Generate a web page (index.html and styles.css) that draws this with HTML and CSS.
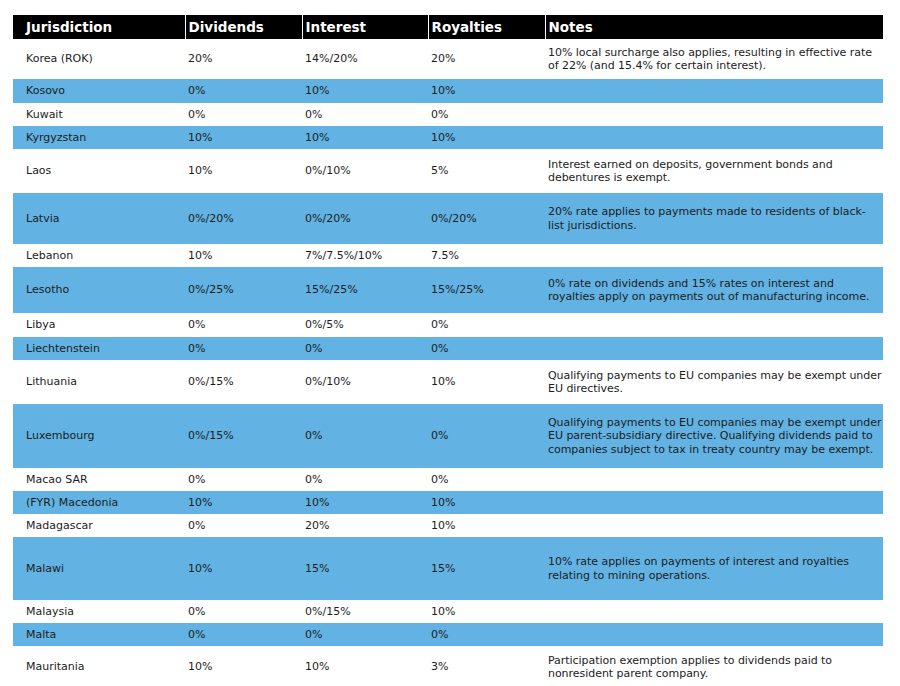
FILE: index.html
```html
<!DOCTYPE html>
<html>
<head>
<meta charset="utf-8">
<link rel="stylesheet" href="styles.css">
</head>
<body>
<table class="rates">
  <colgroup>
    <col class="c-jur"><col class="c-div"><col class="c-int"><col class="c-roy"><col class="c-notes">
  </colgroup>
  <thead>
    <tr>
      <th class="jur">Jurisdiction</th><th>Dividends</th><th>Interest</th><th>Royalties</th><th>Notes</th>
    </tr>
  </thead>
  <tbody>
    <tr class="h40"><td class="jur">Korea (ROK)</td><td>20%</td><td>14%/20%</td><td>20%</td><td class="note">10% local surcharge also applies, resulting in effective rate of 22% (and 15.4% for certain interest).</td></tr>
    <tr class="h24 blue"><td class="jur">Kosovo</td><td>0%</td><td>10%</td><td>10%</td><td class="note"></td></tr>
    <tr class="h23"><td class="jur">Kuwait</td><td>0%</td><td>0%</td><td>0%</td><td class="note"></td></tr>
    <tr class="h23 blue"><td class="jur">Kyrgyzstan</td><td>10%</td><td>10%</td><td>10%</td><td class="note"></td></tr>
    <tr class="h44"><td class="jur">Laos</td><td>10%</td><td>0%/10%</td><td>5%</td><td class="note">Interest earned on deposits, government bonds and debentures is exempt.</td></tr>
    <tr class="h51 blue"><td class="jur">Latvia</td><td>0%/20%</td><td>0%/20%</td><td>0%/20%</td><td class="note">20% rate applies to payments made to residents of black-<br>list jurisdictions.</td></tr>
    <tr class="h23"><td class="jur">Lebanon</td><td>10%</td><td>7%/7.5%/10%</td><td>7.5%</td><td class="note"></td></tr>
    <tr class="h45 blue"><td class="jur">Lesotho</td><td>0%/25%</td><td>15%/25%</td><td>15%/25%</td><td class="note">0% rate on dividends and 15% rates on interest and royalties apply on payments out of manufacturing income.</td></tr>
    <tr class="h24"><td class="jur">Libya</td><td>0%</td><td>0%/5%</td><td>0%</td><td class="note"></td></tr>
    <tr class="h23 blue"><td class="jur">Liechtenstein</td><td>0%</td><td>0%</td><td>0%</td><td class="note"></td></tr>
    <tr class="h44"><td class="jur">Lithuania</td><td>0%/15%</td><td>0%/10%</td><td>10%</td><td class="note">Qualifying payments to EU companies may be exempt under EU directives.</td></tr>
    <tr class="h64 blue"><td class="jur">Luxembourg</td><td>0%/15%</td><td>0%</td><td>0%</td><td class="note">Qualifying payments to EU companies may be exempt under EU parent-subsidiary directive. Qualifying dividends paid to companies subject to tax in treaty country may be exempt.</td></tr>
    <tr class="h23"><td class="jur">Macao SAR</td><td>0%</td><td>0%</td><td>0%</td><td class="note"></td></tr>
    <tr class="h23 blue"><td class="jur">(FYR) Macedonia</td><td>10%</td><td>10%</td><td>10%</td><td class="note"></td></tr>
    <tr class="h23"><td class="jur">Madagascar</td><td>0%</td><td>20%</td><td>10%</td><td class="note"></td></tr>
    <tr class="h63 blue"><td class="jur">Malawi</td><td>10%</td><td>15%</td><td>15%</td><td class="note">10% rate applies on payments of interest and royalties relating to mining operations.</td></tr>
    <tr class="h23"><td class="jur">Malaysia</td><td>0%</td><td>0%/15%</td><td>10%</td><td class="note"></td></tr>
    <tr class="h23 blue"><td class="jur">Malta</td><td>0%</td><td>0%</td><td>0%</td><td class="note"></td></tr>
    <tr class="h42"><td class="jur">Mauritania</td><td>10%</td><td>10%</td><td>3%</td><td class="note">Participation exemption applies to dividends paid to nonresident parent company.</td></tr>
  </tbody>
</table>
</body>
</html>
```
FILE: styles.css
```css
html, body {
  margin: 0;
  padding: 0;
  background: #ffffff;
}

.rates {
  margin: 15px 0 0 13px;
  width: 870px;
  table-layout: fixed;
  border-collapse: collapse;
  border-spacing: 0;
  font-family: "DejaVu Sans", Verdana, sans-serif;
  color: #1c1c1c;
}

.c-jur { width: 172px; }
.c-div { width: 117px; }
.c-int { width: 126px; }
.c-roy { width: 117px; }
.c-notes { width: 338px; }

.rates th {
  height: 24px;
  padding: 0 3px;
  background: #000000;
  color: #ffffff;
  font-size: 13.5px;
  font-weight: bold;
  text-align: left;
  vertical-align: middle;
  border-left: 1px solid #ffffff;
  line-height: 16px;
  box-sizing: border-box;
}

.rates th:first-child {
  border-left: none;
}

.rates th.jur,
.rates td.jur {
  padding-left: 13px;
}

.rates td {
  padding: 0 3px;
  font-size: 11px;
  line-height: 13.3px;
  vertical-align: middle;
  text-align: left;
  box-sizing: border-box;
}

.rates td.note {
  padding-right: 0;
  letter-spacing: -0.04px;
}

.rates tr.blue td {
  background: #62b3e3;
}

.h23 { height: 23px; }
.h24 { height: 24px; }
.h40 { height: 40px; }
.h42 { height: 42px; }
.h44 { height: 44px; }
.h45 { height: 46px; }
.h51 { height: 51px; }
.h63 { height: 63px; }
.h64 { height: 64px; }
```
